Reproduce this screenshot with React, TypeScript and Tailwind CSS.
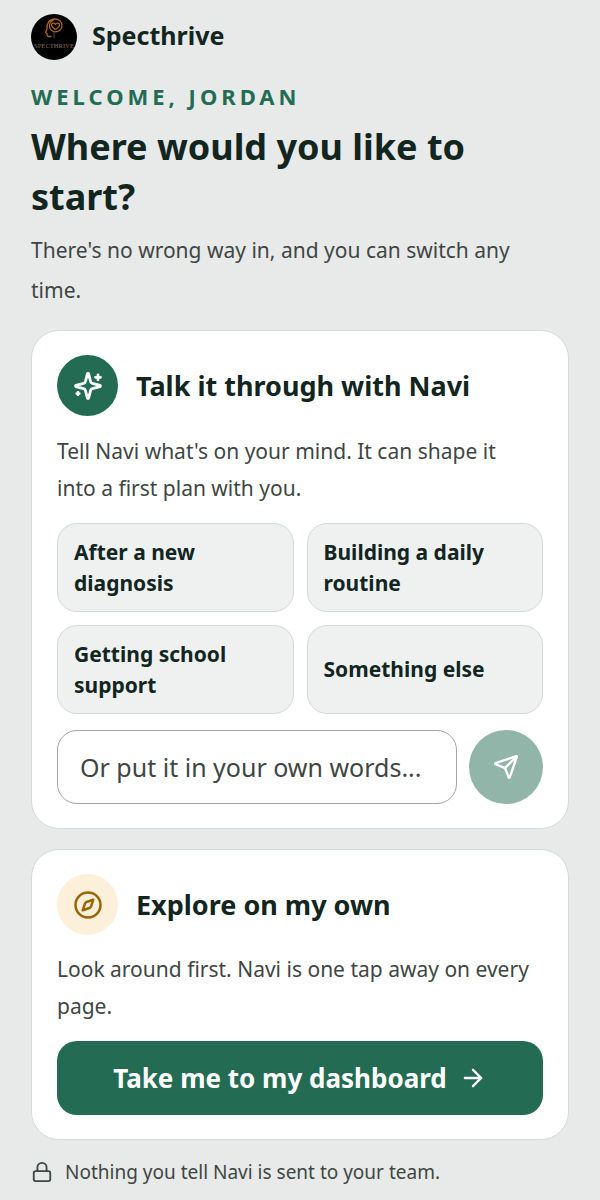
import { ArrowRight, Compass, Lock, Send } from "lucide-react";

const prompts = [
  "After a new diagnosis",
  "Building a daily routine",
  "Getting school support",
  "Something else",
];

const Logo = () => (
  <svg viewBox="0 0 46 46" className="size-[46px]" role="img" aria-label="Specthrive logo">
    <circle cx="23" cy="23" r="23" fill="#000" />
    <g fill="none" stroke="#a8641f" strokeWidth="1.3" strokeLinecap="round" strokeLinejoin="round">
      <path d="M20 22.500h-2.500c-1.500 0-1.500-1.500-1.500-3l-1.500-1 1.500-3.500c-.5-6 2.500-10 8-10 4 0 7 2.800 7 6.500s-3 6.300-6.500 6.300c-3.500 0-6-2.500-6-5.800 0-2.500 1.300-4.500 3.500-5.500" />
      <path d="M24.500 15.500c-2-1.500-4.500-3-4-5 .5-1.800 3.200-1.700 4 0 .8-1.700 3.500-1.800 4 0 .5 2-2 3.500-4 5z" />
      <path d="M23 18v6" stroke="#5f4020" strokeWidth="1" />
    </g>
    <text x="23" y="34" textAnchor="middle" fontSize="6.600" fill="#85735a" fontFamily="Liberation Serif, serif">
      SPECTHRIVE
    </text>
  </svg>
);

const Sparkles = () => (
  <svg
    viewBox="0 0 24 24"
    className="size-[30px]"
    fill="none"
    stroke="currentColor"
    strokeWidth="2.2"
    strokeLinecap="round"
    strokeLinejoin="round"
    aria-hidden="true"
  >
    <path d="M9.937 15.5A2 2 0 0 0 8.5 14.063l-6.135-1.582a.5.5 0 0 1 0-.962L8.5 9.936A2 2 0 0 0 9.937 8.5l1.582-6.135a.5.5 0 0 1 .963 0L14.063 8.5A2 2 0 0 0 15.5 9.937l6.135 1.581a.5.5 0 0 1 0 .964L15.5 14.063a2 2 0 0 0-1.437 1.437l-1.582 6.135a.5.5 0 0 1-.963 0z" />
    <path d="M20 3v4M22 5h-4M4 17v2M5 18H3" />
  </svg>
);

export default function App() {
  return (
    <main className="min-h-screen bg-[#e7eae9] px-[31px] pt-3.5 pb-2 font-['Noto_Sans',sans-serif] text-[#12261f]">
      <header className="flex items-center gap-[15px]">
        <Logo />
        <span className="pb-1 text-[25px] leading-[31px] font-bold">Specthrive</span>
      </header>

      <p className="mt-5 text-[22px] leading-8 font-bold tracking-[4px] text-[#236c53] uppercase">
        Welcome, Jordan
      </p>
      <h1 className="mt-[10px] text-[36px] leading-[50px] font-bold">Where would you like to start?</h1>
      <p className="mt-2 pr-6 text-[21px] leading-10 text-[#3e4643]">
        There's no wrong way in, and you can switch any time.
      </p>

      {/* Talk to Navi */}
      <section className="mt-5 rounded-[28px] border border-[#d3dad7] bg-white px-[25px] py-6">
        <div className="flex items-center gap-[18px]">
          <div className="flex size-[61px] items-center justify-center rounded-full bg-[#236c53] text-white">
            <Sparkles />
          </div>
          <h2 className="text-[27px] leading-[37px] font-bold">Talk it through with Navi</h2>
        </div>
        <p className="mt-[17px] pr-3 text-[21px] leading-[37px] text-[#3e4643]">
          Tell Navi what's on your mind. It can shape it into a first plan with you.
        </p>
        <div className="mt-4 grid grid-cols-2 gap-[13px]">
          {prompts.map((prompt) => (
            <button
              key={prompt}
              type="button"
              className="min-h-[89px] rounded-[20px] border border-[#d3dad7] bg-[#eff1f1] px-4 py-3 text-left text-[21px] leading-[31px] font-bold"
            >
              {prompt}
            </button>
          ))}
        </div>
        <form className="mt-4 flex items-center gap-3" onSubmit={(e) => e.preventDefault()}>
          <input
            type="text"
            aria-label="Your own words"
            placeholder="Or put it in your own words..."
            className="h-[74px] min-w-0 flex-1 rounded-[20px] border border-[#a3a6a5] bg-white px-[22px] text-[25px] placeholder:text-[#3e4643]"
          />
          <button
            type="submit"
            aria-label="Send"
            className="flex size-[74px] shrink-0 items-center justify-center rounded-full bg-[#91b5a9] text-white"
          >
            <Send size={26} strokeWidth={2.2} />
          </button>
        </form>
      </section>

      {/* Explore */}
      <section className="mt-5 rounded-[28px] border border-[#d3dad7] bg-white px-[25px] py-6">
        <div className="flex items-center gap-[18px]">
          <div className="flex size-[61px] items-center justify-center rounded-full bg-[#fdf0da] text-[#9a6508]">
            <Compass size={30} />
          </div>
          <h2 className="text-[27px] leading-[37px] font-bold">Explore on my own</h2>
        </div>
        <p className="mt-4 pr-3 text-[21px] leading-[37px] text-[#3e4643]">
          Look around first. Navi is one tap away on every page.
        </p>
        <button
          type="button"
          className="mt-4 flex h-[74px] w-full items-center justify-center gap-3 rounded-[20px] bg-[#236c53] text-[26px] font-bold text-white"
        >
          Take me to my dashboard
          <ArrowRight size={28} />
        </button>
      </section>

      <p className="mt-4 flex items-center gap-3 text-[19px] leading-8 text-[#3e4643]">
        <Lock size={22} />
        Nothing you tell Navi is sent to your team.
      </p>
    </main>
  );
}
